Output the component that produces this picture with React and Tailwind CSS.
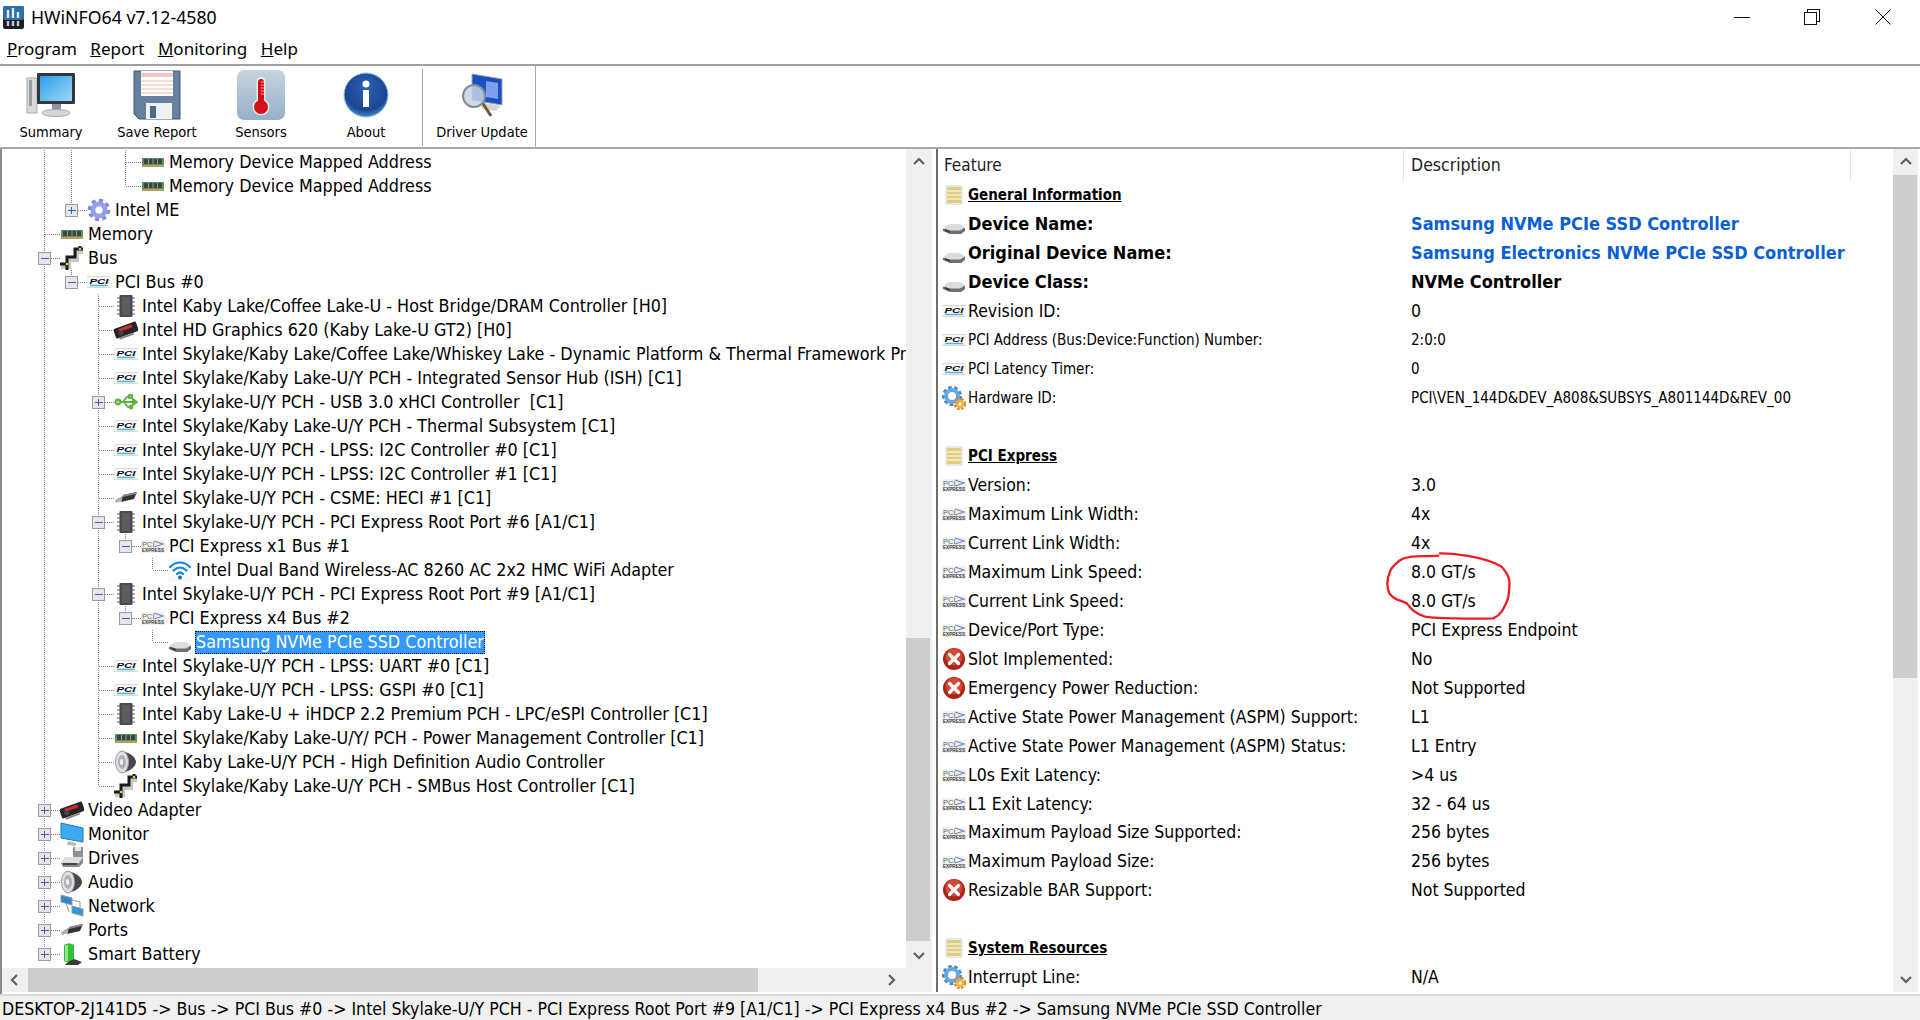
const TAHOMA = "font-['DejaVu_Sans',sans-serif] font-stretch-condensed";

function Chip() {
    const pins = [4, 8, 12, 16, 20];
    return (
        <svg width="24" height="24" viewBox="0 0 24 24">
            {pins.map((y) => (
                <g key={y}>
                    <rect x="3" y={y - 1} width="3" height="2" fill="#aaa" />
                    <rect x="18" y={y - 1} width="3" height="2" fill="#aaa" />
                </g>
            ))}
            <rect x="5.5" y="1" width="13" height="22" rx="1" fill="#4a4a4e" />
            <rect x="8" y="3" width="8" height="18" fill="#5c5c62" />
        </svg>
    );
}

function Ram() {
    return (
        <svg width="24" height="24" viewBox="0 0 24 24">
            <rect x="1" y="8" width="22" height="9" fill="#5d8f68" />
            <rect x="3" y="9" width="18" height="5" fill="#39463c" />
            <path d="M7.5 9v5M12 9v5M16.5 9v5" stroke="#8aa08e" />
            <rect x="1" y="15" width="22" height="2" fill="#b5a25a" />
        </svg>
    );
}

function Gear() {
    return (
        <svg width="24" height="24" viewBox="0 0 24 24" fill="none">
            <circle cx="12" cy="12" r="9.5" stroke="#8088d8" strokeWidth="3.5" strokeDasharray="4 3.4" />
            <circle cx="12" cy="12" r="6" stroke="#979fe8" strokeWidth="5" />
            <circle cx="12" cy="12" r="3.5" fill="#fff" />
        </svg>
    );
}

function Bus() {
    return (
        <svg width="24" height="24" viewBox="0 0 24 24" fill="none">
            <path d="M1 21h8v-7h8V6h6" stroke="#c8c8c8" strokeWidth="4" />
            <path d="M0 18h7v-7h8V3h8M7 18v6M20 0v3" stroke="#1a1a1a" strokeWidth="3" />
            <circle cx="7" cy="18" r="1.3" fill="#e4d23a" />
            <circle cx="20" cy="3" r="1.3" fill="#e4d23a" />
        </svg>
    );
}

function Pci() {
    return (
        <svg width="24" height="24" viewBox="0 0 24 24">
            <rect x="0" y="6" width="24" height="12" fill="#f6f6f6" />
            <path d="M0 6.5h24M0 17.5h24" stroke="#d8d8d8" />
            <path d="M3 15.5h18" stroke="#4db7e0" strokeWidth="1.5" />
            <text x="12" y="14" textAnchor="middle" fontSize="8" fontWeight="900" fontStyle="italic" fontFamily="Liberation Sans, sans-serif" fill="#111" textLength="19" lengthAdjust="spacingAndGlyphs">PCI</text>
        </svg>
    );
}

function PciE() {
    return (
        <svg width="24" height="24" viewBox="0 0 24 24">
            <rect x="0" y="6" width="24" height="13" fill="#f1f1f1" />
            <text x="1" y="13" fontSize="7.5" fontFamily="Liberation Sans, sans-serif" fill="#666">PCI</text>
            <path d="M13 7l9 3-9 3" fill="none" stroke="#6d87c4" strokeWidth="1.2" />
            <text x="1" y="18" fontSize="4.5" fontWeight="700" fontFamily="Liberation Sans, sans-serif" fill="#333" textLength="22" lengthAdjust="spacingAndGlyphs">EXPRESS</text>
        </svg>
    );
}

function Gpu() {
    return (
        <svg width="24" height="24" viewBox="0 0 24 24">
            <g transform="rotate(-20 12 12)">
                <rect x="0" y="7" width="24" height="10" rx="1" fill="#2a2326" />
                <rect x="5" y="8.5" width="14" height="3" fill="#c22f35" />
                <circle cx="6" cy="13" r="2.5" fill="#4a4246" />
                <rect x="3" y="17" width="15" height="2" fill="#888" />
            </g>
        </svg>
    );
}

function Usb() {
    return (
        <svg width="24" height="24" viewBox="0 0 24 24" fill="none" stroke="#5bb342" strokeWidth="1.8">
            <circle cx="4" cy="12" r="2.5" fill="#9fdc7d" />
            <path d="M6 12h13M9 12l4-5h3M10 12l4 5h2" />
            <path d="M19 9l4 3-4 3z" fill="#5bb342" />
            <rect x="15" y="5" width="3" height="3" fill="#9fdc7d" />
            <circle cx="17" cy="17" r="1.5" fill="#9fdc7d" />
        </svg>
    );
}

function Hdd() {
    return (
        <svg width="24" height="24" viewBox="0 0 24 24">
            <path d="M1 17l5-4h13l4 3v3l-4 3H8l-7-3z" fill="#6e6e6e" />
            <path d="M1 16.5L7 12h11l5 3.5-5 3H8z" fill="#dcdcdc" />
            <path d="M3 17l5 2v2l-5-2z" fill="#3d3d3d" />
        </svg>
    );
}

function Wifi() {
    return (
        <svg width="24" height="24" viewBox="0 0 24 24" fill="none" stroke="#1c86d8" strokeLinecap="round">
            <rect x="0" y="0" width="24" height="24" fill="#f7f9fb" stroke="none" />
            <path d="M2 9c6-6 14-6 20 0" strokeWidth="2.2" />
            <path d="M5.5 12.5c4-4 9-4 13 0" strokeWidth="2.2" />
            <path d="M9 16c2-2 4-2 6 0" strokeWidth="2.2" />
            <circle cx="12" cy="19.5" r="2" fill="#1c6fc0" stroke="none" />
        </svg>
    );
}

function Speaker() {
    return (
        <svg width="24" height="24" viewBox="0 0 24 24">
            <path d="M8 1C17 3 22 8 22 12S17 21 8 23z" fill="#46484b" />
            <ellipse cx="8" cy="12" rx="6.5" ry="11" fill="#dfe2e5" stroke="#9a9a9a" />
            <ellipse cx="8" cy="12" rx="4" ry="7" fill="#aeb2b8" />
            <ellipse cx="7.5" cy="12" rx="1.5" ry="3" fill="#f2f3f5" />
        </svg>
    );
}

function Port() {
    return (
        <svg width="24" height="24" viewBox="0 0 24 24">
            <path d="M9 9l14-3-3 7-13 3z" fill="#333" />
            <path d="M9 9l14-3-1 2-13 3z" fill="#888" />
            <path d="M1 14l7-4v5l-6 2z" fill="#b0b0b0" />
        </svg>
    );
}

function Monitor() {
    return (
        <svg width="24" height="24" viewBox="0 0 24 24">
            <path d="M1 1l22 5v14L1 16z" fill="#3fa9f0" stroke="#2778b5" />
            <path d="M8 19l8 2v3l-9-1z" fill="#b8bcc0" />
        </svg>
    );
}

function Drives() {
    return (
        <svg width="24" height="24" viewBox="0 0 24 24">
            <rect x="13" y="1" width="10" height="10" fill="#8d9298" />
            <rect x="15" y="1" width="6" height="4" fill="#e6e6e6" />
            <path d="M1 17l5-6h17v6l-4 4H3z" fill="#8a8a8a" />
            <path d="M1 17l5-6h17l-4 6z" fill="#dedede" />
            <path d="M3 18h14" stroke="#444" strokeWidth="2" />
        </svg>
    );
}

function Network() {
    return (
        <svg width="24" height="24" viewBox="0 0 24 24">
            <path d="M1 1l11 3v7L1 8z" fill="#2f86d6" stroke="#999" />
            <path d="M12 12l11 3v7l-11-3z" fill="#2f96e0" stroke="#999" />
            <path d="M12 6l8 2v6M6 9l3 9" stroke="#9a9a9a" fill="none" />
        </svg>
    );
}

function Battery() {
    return (
        <svg width="24" height="24" viewBox="0 0 24 24">
            <rect x="7" y="1" width="4" height="2" fill="#8fd48f" />
            <rect x="4" y="2" width="10" height="18" rx="2" fill="#35bd3c" />
            <rect x="5" y="3" width="3" height="16" fill="#8ee68f" />
            <path d="M14 17l8 3-4 3H5l3-3z" fill="#3a3a3a" />
        </svg>
    );
}

function Book() {
    return (
        <svg width="24" height="24" viewBox="0 0 24 24">
            <rect x="3" y="2" width="18" height="20" rx="2" fill="#e8e8e4" />
            <rect x="5" y="4" width="14" height="16" fill="#e0cd85" />
            <path d="M5 8h14M5 12h14M5 16h14" stroke="#f5eecb" strokeWidth="1.5" />
        </svg>
    );
}

function ErrorIcon() {
    return (
        <svg width="24" height="24" viewBox="0 0 24 24">
            <circle cx="12" cy="12" r="11" fill="#a92518" />
            <circle cx="12" cy="10" r="8.5" fill="#d44a36" />
            <path d="M7.5 7.5l9 9M16.5 7.5l-9 9" stroke="#fff" strokeWidth="3.2" strokeLinecap="round" />
        </svg>
    );
}

function Gears() {
    return (
        <svg width="24" height="24" viewBox="0 0 24 24" fill="none">
            <circle cx="10" cy="10" r="8.5" stroke="#3e86c8" strokeWidth="3" strokeDasharray="3.5 2.5" />
            <circle cx="10" cy="10" r="6" stroke="#6aa6de" strokeWidth="4" />
            <circle cx="18" cy="18" r="5" stroke="#d98f28" strokeWidth="2.5" strokeDasharray="2.5 1.5" />
            <circle cx="18" cy="18" r="3" stroke="#f0b040" strokeWidth="2.5" />
        </svg>
    );
}

function AppLogo() {
    return (
        <svg width="21" height="23" viewBox="0 0 21 23">
            <rect x="0" y="0" width="21" height="23" rx="2" fill="#1b1f26" />
            <rect x="0" y="0" width="21" height="14" rx="2" fill="#2f6fa8" />
            <path d="M5 4v8M10 2v10M15 6v6" stroke="#dfeefa" strokeWidth="2.4" />
            <path d="M5 15v5M10 15v5M15 15v5" stroke="#c8c8c8" strokeWidth="2.4" />
        </svg>
    );
}

function SummaryIcon() {
    return (
        <svg width="50" height="48" viewBox="0 0 50 48">
            <defs>
                <linearGradient id="screen" x1="0" y1="0" x2="1" y2="1">
                    <stop offset="0" stopColor="#2b9fe8" />
                    <stop offset="1" stopColor="#9ed8f7" />
                </linearGradient>
            </defs>
            <rect x="1" y="7" width="10" height="35" fill="#d8dadc" stroke="#aaa" />
            <rect x="3" y="9" width="3" height="26" fill="#9aa0a6" />
            <rect x="11" y="2" width="38" height="31" rx="1" fill="#33373b" />
            <rect x="14" y="5" width="32" height="25" fill="url(#screen)" />
            <rect x="26" y="33" width="9" height="6" fill="#8f9498" />
            <ellipse cx="30" cy="42" rx="14" ry="3.5" fill="#d2d4d6" stroke="#a8a8a8" />
        </svg>
    );
}

function FloppyIcon() {
    return (
        <svg width="48" height="50" viewBox="0 0 48 50">
            <path d="M1 1h46v48H6l-5-5z" fill="#66819f" stroke="#3f5673" />
            <rect x="8" y="1" width="32" height="25" fill="#fff" />
            <path d="M8 5h32" stroke="#f7c6bf" strokeWidth="4" />
            <path d="M8 11h32M8 15h32M8 19h32M8 23h32" stroke="#f3b8ae" />
            <rect x="13" y="33" width="26" height="16" fill="#eef0f2" />
            <rect x="17" y="36" width="6" height="12" fill="#4f6a89" />
        </svg>
    );
}

function SensorsIcon() {
    return (
        <svg width="48" height="50" viewBox="0 0 48 50">
            <defs>
                <linearGradient id="tile" x1="0" y1="0" x2="0" y2="1">
                    <stop offset="0" stopColor="#c7d4df" />
                    <stop offset="1" stopColor="#95b0c9" />
                </linearGradient>
            </defs>
            <rect x="0" y="0" width="48" height="50" rx="7" fill="url(#tile)" />
            <rect x="19.5" y="7" width="9" height="30" rx="4.5" fill="#e8eef2" />
            <circle cx="24" cy="37" r="8.5" fill="#e8eef2" />
            <circle cx="24" cy="37" r="7" fill="#d6101c" />
            <rect x="21" y="9" width="6" height="28" rx="3" fill="#d6101c" />
            <path d="M24 12h3M24 15h3M24 18h3M24 21h3M24 24h3" stroke="#f0a0a0" />
        </svg>
    );
}

function InfoIcon() {
    return (
        <svg width="46" height="48" viewBox="0 0 46 48">
            <defs>
                <radialGradient id="orb" cx="0.5" cy="0.35" r="0.7">
                    <stop offset="0" stopColor="#2a62b8" />
                    <stop offset="0.7" stopColor="#1c4590" />
                    <stop offset="1" stopColor="#4f9ad8" />
                </radialGradient>
            </defs>
            <circle cx="23" cy="24" r="22" fill="url(#orb)" stroke="#8fc4ea" />
            <circle cx="23" cy="13" r="3.5" fill="#fff" />
            <rect x="20" y="19" width="6" height="17" fill="#fff" />
        </svg>
    );
}

function DriverIcon() {
    return (
        <svg width="44" height="46" viewBox="0 0 44 46">
            <path d="M12 2l30 5v26L12 28z" fill="#1b4fc0" stroke="#9aa4b0" />
            <path d="M26 9l12 2v16l-12-2z" fill="#7ea0ea" />
            <path d="M20 30l21 4-5 5-14-2z" fill="#d4d4d4" />
            <path d="M22 30l9 14" stroke="#7a5230" strokeWidth="3" />
            <circle cx="14" cy="24" r="11" fill="#c8d4e4" fillOpacity="0.85" stroke="#7f8c99" strokeWidth="2" />
        </svg>
    );
}

const TREE = [
    [3, null, Ram, "Memory Device Mapped Address"],
    [3, null, Ram, "Memory Device Mapped Address"],
    [1, "plus", Gear, "Intel ME"],
    [0, null, Ram, "Memory"],
    [0, "minus", Bus, "Bus"],
    [1, "minus", Pci, "PCI Bus #0"],
    [2, null, Chip, "Intel Kaby Lake/Coffee Lake-U - Host Bridge/DRAM Controller [H0]"],
    [2, null, Gpu, "Intel HD Graphics 620 (Kaby Lake-U GT2) [H0]"],
    [2, null, Pci, "Intel Skylake/Kaby Lake/Coffee Lake/Whiskey Lake - Dynamic Platform & Thermal Framework Pr"],
    [2, null, Pci, "Intel Skylake/Kaby Lake-U/Y PCH - Integrated Sensor Hub (ISH) [C1]"],
    [2, "plus", Usb, "Intel Skylake-U/Y PCH - USB 3.0 xHCI Controller  [C1]"],
    [2, null, Pci, "Intel Skylake/Kaby Lake-U/Y PCH - Thermal Subsystem [C1]"],
    [2, null, Pci, "Intel Skylake-U/Y PCH - LPSS: I2C Controller #0 [C1]"],
    [2, null, Pci, "Intel Skylake-U/Y PCH - LPSS: I2C Controller #1 [C1]"],
    [2, null, Port, "Intel Skylake-U/Y PCH - CSME: HECI #1 [C1]"],
    [2, "minus", Chip, "Intel Skylake-U/Y PCH - PCI Express Root Port #6 [A1/C1]"],
    [3, "minus", PciE, "PCI Express x1 Bus #1"],
    [4, null, Wifi, "Intel Dual Band Wireless-AC 8260 AC 2x2 HMC WiFi Adapter"],
    [2, "minus", Chip, "Intel Skylake-U/Y PCH - PCI Express Root Port #9 [A1/C1]"],
    [3, "minus", PciE, "PCI Express x4 Bus #2"],
    [4, null, Hdd, "Samsung NVMe PCIe SSD Controller", true],
    [2, null, Pci, "Intel Skylake-U/Y PCH - LPSS: UART #0 [C1]"],
    [2, null, Pci, "Intel Skylake-U/Y PCH - LPSS: GSPI #0 [C1]"],
    [2, null, Chip, "Intel Kaby Lake-U + iHDCP 2.2 Premium PCH - LPC/eSPI Controller [C1]"],
    [2, null, Ram, "Intel Skylake/Kaby Lake-U/Y/ PCH - Power Management Controller [C1]"],
    [2, null, Speaker, "Intel Kaby Lake-U/Y PCH - High Definition Audio Controller"],
    [2, null, Bus, "Intel Skylake/Kaby Lake-U/Y PCH - SMBus Host Controller [C1]"],
    [0, "plus", Gpu, "Video Adapter"],
    [0, "plus", Monitor, "Monitor"],
    [0, "plus", Drives, "Drives"],
    [0, "plus", Speaker, "Audio"],
    [0, "plus", Network, "Network"],
    [0, "plus", Port, "Ports"],
    [0, "plus", Battery, "Smart Battery"],
];

const S = "section";
const B = "bold";
const M = "small";

const DETAILS = [
    [S, Book, "General Information"],
    [B, Hdd, "Device Name:", "Samsung NVMe PCIe SSD Controller", "link"],
    [B, Hdd, "Original Device Name:", "Samsung Electronics NVMe PCIe SSD Controller", "link"],
    [B, Hdd, "Device Class:", "NVMe Controller", "strong"],
    [null, Pci, "Revision ID:", "0"],
    [M, Pci, "PCI Address (Bus:Device:Function) Number:", "2:0:0"],
    [M, Pci, "PCI Latency Timer:", "0"],
    [M, Gears, "Hardware ID:", "PCI\\VEN_144D&DEV_A808&SUBSYS_A801144D&REV_00"],
    [],
    [S, Book, "PCI Express"],
    [null, PciE, "Version:", "3.0"],
    [null, PciE, "Maximum Link Width:", "4x"],
    [null, PciE, "Current Link Width:", "4x"],
    [null, PciE, "Maximum Link Speed:", "8.0 GT/s"],
    [null, PciE, "Current Link Speed:", "8.0 GT/s"],
    [null, PciE, "Device/Port Type:", "PCI Express Endpoint"],
    [null, ErrorIcon, "Slot Implemented:", "No"],
    [null, ErrorIcon, "Emergency Power Reduction:", "Not Supported"],
    [null, PciE, "Active State Power Management (ASPM) Support:", "L1"],
    [null, PciE, "Active State Power Management (ASPM) Status:", "L1 Entry"],
    [null, PciE, "L0s Exit Latency:", ">4 us"],
    [null, PciE, "L1 Exit Latency:", "32 - 64 us"],
    [null, PciE, "Maximum Payload Size Supported:", "256 bytes"],
    [null, PciE, "Maximum Payload Size:", "256 bytes"],
    [null, ErrorIcon, "Resizable BAR Support:", "Not Supported"],
    [],
    [S, Book, "System Resources"],
    [null, Gears, "Interrupt Line:", "N/A"],
];

// x of the connector for a tree level, inside the pane's border
function levelX(level) {
    return 42 + 27 * level;
}

// does a sibling at this level come after row i, before the branch closes
function continues(i, level) {
    for (let j = i + 1; j < TREE.length; j++) {
        if (TREE[j][0] === level) return true;
        if (TREE[j][0] < level) return false;
    }
    return false;
}

function TreeLines({ index, level, expander }) {
    const width = levelX(level) + 16;
    const x = levelX(level) + 0.5;
    const guides = [];
    for (let k = 0; k < level; k++) {
        if (continues(index, k)) guides.push(levelX(k) + 0.5);
    }
    return (
        <svg width={width} height="24" className="shrink-0" shapeRendering="crispEdges">
            <g stroke="#808080" strokeDasharray="1 1" fill="none">
                {guides.map((g) => (
                    <path key={g} d={`M${g} 0V24`} />
                ))}
                <path d={`M${x} 0V${continues(index, level) ? 24 : 12}`} />
                <path d={`M${x} 12.5H${x + 15}`} />
            </g>
            {expander && (
                <g>
                    <rect x={x - 6} y="6.5" width="12" height="12" fill="#e4e6ea" stroke="#9c9c9c" />
                    <path d={`M${x - 3.5} 12.5H${x + 4}`} stroke="#3f5f9f" />
                    {expander === "plus" && <path d={`M${x} 9V16`} stroke="#3f5f9f" />}
                </g>
            )}
        </svg>
    );
}

function TreeRow({ index, row }) {
    const [level, expander, Icon, text, selected] = row;
    return (
        <div className="flex h-6 items-center whitespace-pre text-[17.8px]">
            <TreeLines index={index} level={level} expander={expander} />
            <span className="flex w-7 shrink-0">
                <Icon />
            </span>
            <span
                className={
                    selected
                        ? "-ml-px h-[23px] border border-dotted border-black bg-[#3399ff] leading-[20px] text-white"
                        : ""
                }
            >
                {text}
            </span>
        </div>
    );
}

function Chevron({ dir }) {
    const paths = {
        up: "M2 9l5-5 5 5",
        down: "M2 5l5 5 5-5",
        left: "M9 2L4 7l5 5",
        right: "M5 2l5 5-5 5",
    };
    return (
        <svg width="14" height="14" viewBox="0 0 14 14" fill="none" stroke="#606060" strokeWidth="2.2">
            <path d={paths[dir]} />
        </svg>
    );
}

function ToolButton({ width, icon, label }) {
    return (
        <div className={`flex flex-col items-center ${width}`}>
            <div className="flex h-[52px] items-center">{icon}</div>
            <span className="mt-[2px] text-[14.5px] leading-[18px]">{label}</span>
        </div>
    );
}

function DetailRow({ row }) {
    const [kind, Icon, label, value, tone] = row;
    if (!Icon) return <div className="h-[29px]" />;
    let labelClass = "text-[17.5px]";
    if (kind === B) labelClass = "pb-[2px] text-[18px] font-bold";
    if (kind === M) labelClass = "text-[15px]";
    if (kind === S) labelClass = "text-[15px] font-bold underline";
    let valueClass = "text-[17.5px]";
    if (kind === M) valueClass = "text-[15px]";
    if (tone === "link") valueClass = "pb-[2px] text-[18px] font-bold text-[#0b5fd6]";
    if (tone === "strong") valueClass = "pb-[2px] text-[18px] font-bold";
    return (
        <div className="flex h-[29px] items-center whitespace-nowrap">
            <span className="ml-[4px] flex w-[26px] shrink-0">
                <Icon />
            </span>
            <span className={`w-[443px] shrink-0 ${labelClass}`}>{label}</span>
            <span className={valueClass}>{value}</span>
        </div>
    );
}

export default function App() {
    return (
        <div className={`relative flex h-[1020px] w-[1920px] flex-col overflow-hidden bg-white text-[17.5px] text-black ${TAHOMA}`}>

            {/* TITLE BAR */}

            <div className="flex h-[34px] shrink-0 items-center pl-[3px]">
                <AppLogo />
                <span className="ml-[7px] font-['Noto_Sans',sans-serif] text-[17.7px] font-stretch-normal">
                    HWiNFO64 v7.12-4580
                </span>
                <div className="ml-auto flex">
                    <svg width="16" height="16" className="mr-[54px]" stroke="#111" fill="none" shapeRendering="crispEdges">
                        <path d="M0 8.5H16" />
                    </svg>
                    <svg width="16" height="16" className="mr-[55px]" stroke="#111" fill="none" shapeRendering="crispEdges">
                        <path d="M0.5 3.5h12v12h-12zM3.5 3V0.5h12v12H13" />
                    </svg>
                    <svg width="16" height="16" className="mr-[29px]" stroke="#111" fill="none">
                        <path d="M0.5 0.5l15 15M15.5 0.5l-15 15" />
                    </svg>
                </div>
            </div>

            {/* MENU */}

            <div className="flex h-[32px] shrink-0 items-center gap-[13.5px] border-b-2 border-b-[#a0a0a0] pl-[7px] font-['Noto_Sans',sans-serif] text-[17px] font-stretch-normal">
                <span><u>P</u>rogram</span>
                <span><u>R</u>eport</span>
                <span><u>M</u>onitoring</span>
                <span><u>H</u>elp</span>
            </div>

            {/* TOOLBAR */}

            <div className="flex h-[83px] shrink-0 border-b-2 border-b-[#a8a8a8] pt-[3px]">
                <ToolButton width="w-[102px]" icon={<SummaryIcon />} label="Summary" />
                <ToolButton width="w-[110px]" icon={<FloppyIcon />} label="Save Report" />
                <ToolButton width="w-[98px]" icon={<SensorsIcon />} label="Sensors" />
                <ToolButton width="w-[112px]" icon={<InfoIcon />} label="About" />
                <div className="mb-px w-px bg-[#a8a8a8]" />
                <ToolButton width="w-[112px] pl-[6px]" icon={<DriverIcon />} label="Driver Update" />
                <div className="-mt-[3px] w-px bg-[#a8a8a8]" />
            </div>

            {/* PANES */}

            <div className="flex min-h-0 flex-1">

                {/* TREE */}

                <div className="flex w-[932px] shrink-0 flex-col border-l-2 border-l-[#8a8a8a] pb-[2px]">
                    <div className="flex min-h-0 flex-1">
                        <div className="w-[904px] shrink-0 overflow-hidden pt-px">
                            {TREE.map((row, i) => (
                                <TreeRow key={i} index={i} row={row} />
                            ))}
                        </div>
                        <div className="flex w-[26px] shrink-0 flex-col bg-[#f0f0f0]">
                            <div className="flex h-[26px] items-center justify-center">
                                <Chevron dir="up" />
                            </div>
                            <div className="mt-[463px] h-[303px] w-6 bg-[#cdcdcd]" />
                            <div className="mt-auto flex h-[26px] items-center justify-center">
                                <Chevron dir="down" />
                            </div>
                        </div>
                    </div>
                    <div className="flex h-6 shrink-0 items-center bg-[#f0f0f0]">
                        <div className="flex w-[26px] justify-center">
                            <Chevron dir="left" />
                        </div>
                        <div className="h-full w-[730px] bg-[#cdcdcd]" />
                        <div className="ml-[120px] flex w-[26px] justify-center">
                            <Chevron dir="right" />
                        </div>
                    </div>
                </div>

                {/* DETAILS */}

                <div className="mb-[2px] ml-1 flex min-w-0 flex-1 border-l-2 border-l-[#6e6e6e]">
                    <div className="flex min-w-0 flex-1 flex-col overflow-hidden">
                        <div className="flex h-[32px] shrink-0 items-center pt-px">
                            <span className="w-[466px] border-r border-r-[#e5e5e5] pl-[6px] text-[17px] leading-[31px] text-[#222]">
                                Feature
                            </span>
                            <span className="w-[447px] border-r border-r-[#e5e5e5] pl-[7px] text-[17.5px] leading-[31px] text-[#222]">
                                Description
                            </span>
                        </div>
                        {DETAILS.map((row, i) => (
                            <DetailRow key={i} row={row} />
                        ))}
                    </div>
                    <div className="mr-[2px] flex w-[25px] shrink-0 flex-col bg-[#f0f0f0]">
                        <div className="flex h-[26px] items-center justify-center">
                            <Chevron dir="up" />
                        </div>
                        <div className="h-[503px] w-6 bg-[#cdcdcd]" />
                        <div className="mt-auto flex h-[26px] items-center justify-center">
                            <Chevron dir="down" />
                        </div>
                    </div>
                </div>
            </div>

            {/* STATUS BAR */}

            <div className="flex h-[26px] shrink-0 items-center border-t-2 border-t-[#d8d8d8] bg-[#f0f0f0] pl-[2px] pt-[2px] text-[17.6px]">
                DESKTOP-2J141D5 -&gt; Bus -&gt; PCI Bus #0 -&gt; Intel Skylake-U/Y PCH - PCI Express Root Port #9 [A1/C1] -&gt; PCI Express x4 Bus #2 -&gt; Samsung NVMe PCIe SSD Controller
            </div>

            {/* HAND DRAWN MARK */}

            <svg width="160" height="90" viewBox="0 0 480 270" fill="none" stroke="#ee1c25" strokeWidth="7" strokeLinecap="round" strokeLinejoin="round" className="absolute left-[1370px] top-[540px]">
                <path d="M205 47C175 49 145 48 125 50C105 53 92 58 85 65C72 76 62 88 60 95C54 110 52 120 52 130C52 145 54 152 58 160C65 170 72 174 80 178C92 182 102 185 110 190C118 198 122 206 130 212C142 222 152 227 165 230C190 234 220 235 250 235C290 236 330 237 370 235C382 230 390 222 395 215C405 198 412 185 415 170C418 150 419 135 418 120C414 105 406 92 395 80C378 70 355 61 330 55C305 49 282 45 260 43C240 41 225 40 210 40" />
            </svg>

        </div>
    );
}
